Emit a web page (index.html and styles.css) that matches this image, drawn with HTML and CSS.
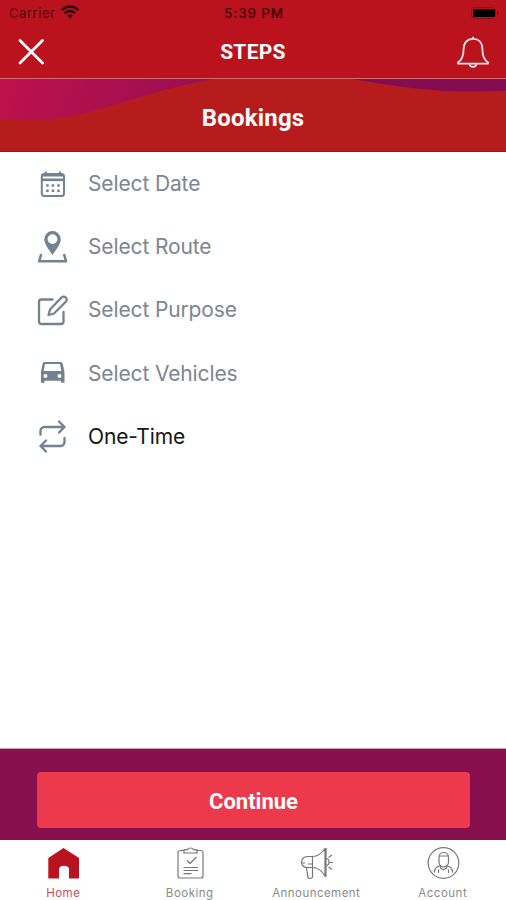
FILE: index.html
```html
<!DOCTYPE html>
<html lang="en">
<head>
<meta charset="utf-8">
<title>Steps</title>
<link rel="stylesheet" href="styles.css">
</head>
<body>
<div class="screen">
  <header class="top">
    <div class="status">
      <div class="carrier"><span>Carrier</span>
        <svg class="wifi" width="18" height="14" viewBox="0 0 18 14" fill="none" stroke="#240306" stroke-width="2.5"><path d="M.8 5.2C5.5.4 12.5.4 17.2 5.2M3.8 8.2c3-3 7.4-3 10.4 0"/><path d="M9 13.4 6.2 10.500C7.800 9 10.200 9 11.800 10.500Z" fill="#240306" stroke="none"/></svg>
      </div>
      <span class="clock">5:39 PM</span>
      <svg class="battery" width="28" height="12" viewBox="0 0 28 12"><rect x=".5" y=".5" width="24" height="11" rx="3" fill="none" stroke="#950f1a"/><rect x="2" y="2" width="22" height="8" rx="1" fill="#000"/><path d="M26 4v4c2-1 2-3 0-4" fill="#71101a"/></svg>
    </div>
    <div class="titlebar">
      <svg class="close" width="30" height="30" viewBox="0 0 30 30" stroke="#fff" stroke-width="2.800" stroke-linecap="round"><path d="m4 3.500 22.500 22.500M26.500 3.500 4 26"/></svg>
      <h1>STEPS</h1>
      <svg class="bell" width="34" height="34" viewBox="0 0 34 34" fill="none" stroke="#fbe3e5" stroke-width="1.800" stroke-linejoin="round"><path d="M17 3.800C10.500 3.800 7.600 8.500 7.600 14 7.600 21.500 6 25 2 27.200V28.600H32V27.200C28 25 26.400 21.500 26.400 14 26.400 8.500 23.500 3.800 17 3.800ZM17 3.700V1.700M13.500 29c.5 3.800 6.500 3.800 7 0"/></svg>
    </div>
  </header>
  <section class="banner">
    <svg class="waves" width="506" height="73" viewBox="0 0 506 73">
      <defs><linearGradient id="wave" gradientUnits="userSpaceOnUse" x1="0" y1="0" x2="210" y2="30"><stop offset="0" stop-color="#bd114b"/><stop offset=".5" stop-color="#ab1050"/><stop offset="1" stop-color="#990d50"/></linearGradient></defs>
      <path fill="url(#wave)" d="M0 0H213C170 8 135 20 100 30 65 41 35 43 0 40Z"/>
      <path fill="#830d50" d="M352 0H506V11.500C450 15 410 10 352 0Z"/>
    </svg>
    <h2>Bookings</h2>
  </section>
  <main>
    <ul class="options">
      <li><svg width="40" height="40" viewBox="0 0 40 40" fill="none" stroke="#748290" stroke-width="2"><rect x="9.800" y="10" width="22.200" height="22" rx="2.500"/><path stroke-width="2.600" d="M9.800 15.800h22.200"/><path d="M13.700 7.500V12M28 7.500V12M9.800 11.500h22.200"/><path stroke-width="2.400" stroke-dasharray="2.500 3" d="M14.200 21.500h14M14.200 26.800h14"/></svg><span>Select Date</span></li>
      <li><svg width="40" height="40" viewBox="0 0 40 40" fill="none" stroke="#748290" stroke-width="2.500"><path fill="#748290" stroke="none" fill-rule="evenodd" d="M20.500 4a8.200 8.200 0 0 0-8.200 8.200c0 5.300 4.700 10 8.200 15.800 3.500-5.800 8.200-10.500 8.200-15.800A8.200 8.200 0 0 0 20.500 4Zm0 3.200a4.900 4.900 0 1 1 0 9.800 4.900 4.900 0 0 1 0-9.800Z"/><path stroke-linejoin="round" d="M9.200 27 7.200 34.300H34L32 27"/></svg><span>Select Route</span></li>
      <li><svg width="40" height="40" viewBox="0 0 40 40" fill="none" stroke="#748290" stroke-width="2.300" stroke-linecap="round" stroke-linejoin="round"><path d="M20.500 9.500H9.500a2.500 2.500 0 0 0-2.500 2.500v19.500a2.500 2.500 0 0 0 2.500 2.500h19.500a2.500 2.500 0 0 0 2.500-2.500V22"/><path d="M18 19.500 29.500 7.500a3 3 0 0 1 4.300 4.300L22 23.500l-5.500 1.500Z"/></svg><span>Select Purpose</span></li>
      <li><svg width="40" height="40" viewBox="0 0 40 40"><path fill="#748290" fill-rule="evenodd" d="M12.500 9h16c1.200 0 2 .8 2.300 2l1.700 8v10.700h-3.500v-2H12.500v2H9V19l1.500-8c.3-1.200 1-2 2-2Zm.5 2-1.300 7h17.600L28 11Zm.5 10a2 2 0 1 0 0 4 2 2 0 0 0 0-4Zm14 0a2 2 0 1 0 0 4 2 2 0 0 0 0-4Z"/></svg><span>Select Vehicles</span></li>
      <li class="on"><svg width="40" height="40" viewBox="0 0 40 40" fill="none" stroke="#748290" stroke-width="2.400" stroke-linecap="round" stroke-linejoin="round"><path d="M8.500 18.500V15a4 4 0 0 1 4-4H32.500M27 5.500l5.500 5.500L27 16.500M32.500 22v4a4 4 0 0 1-4 4H8.500M14 24.500 8.500 30l5.500 5.500"/></svg><span>One-Time</span></li>
    </ul>
  </main>
  <div class="action"><button>Continue</button></div>
  <nav>
    <a class="active"><svg width="36" height="36" viewBox="0 0 36 36"><path fill="#b9131f" d="M18.500 3 34 13V33.500H24V24c0-4.500-10-4.500-10 0V33.500H3.300V13Z"/></svg><span>Home</span></a>
    <a><svg width="36" height="36" viewBox="0 0 36 36" fill="none" stroke="#777" stroke-width="1.200" stroke-linejoin="round"><path d="M12 5.500H8a2 2 0 0 0-2 2v23.500a2 2 0 0 0 2 2H29a2 2 0 0 0 2-2V7.500a2 2 0 0 0-2-2H25M12 4.700h3.500c1-2.300 5-2.300 6 0H25V8H12ZM15 15.500l3 3 6.500-6.500M11.500 22.500H26M11.500 25.500H26M11.500 28.700h8"/></svg><span>Booking</span></a>
    <a class="announcement"><svg width="36" height="36" viewBox="0 0 36 36" fill="none" stroke="#777" stroke-width="1.200" stroke-linejoin="round"><path d="M14.500 11.500H9a5.700 5.700 0 0 0-5 8c1 2.300 2.500 3 5 3H14.500C19.500 22.500 24 26 27 31V3.500C24 8 19.500 11.500 14.500 11.500ZM14.500 11.500V22.500M3.500 18H7M10 19h4.500M8.500 22.500l1.500 10.500c2.500 1 4.500 0 4.500-1V22.500M28 3v29M28 13.500c4 0 4 7 0 7M30.500 12.500l3.500-2.500M31 17.500h4M30.500 22l3.500 2.500"/></svg><span>Announcement</span></a>
    <a><svg width="36" height="36" viewBox="0 0 36 36" fill="none" stroke="#777" stroke-width="1.200" stroke-linejoin="round"><circle cx="18.500" cy="18" r="15.300"/><path d="M14 17V12c0-6 9.500-6 9.500 0V17c0 6.500-9.500 6.500-9.500 0ZM14 11h9.500M15.500 20v3l3 1.800 3-1.800V20M15.500 20.500C11.500 22 9.500 23 9.500 27.500M21.500 20.500C25.500 22 27.500 23 27.500 27.500M13.500 24.500v3.500M23.500 24.500v3.500"/></svg><span>Account</span></a>
  </nav>
</div>
</body>
</html>
```

FILE: styles.css
```css
* { box-sizing: border-box; }
body { margin: 0; background: #fff; font-family: Inter, sans-serif; }
h1, h2, ul { margin: 0; padding: 0; }
.screen { width: 506px; height: 900px; display: flex; flex-direction: column; overflow: hidden; }
.top { height: 79px; flex: none; background: #bb131e; border-bottom: 1px solid #d66a70; }
.status { height: 26px; display: grid; grid-template-columns: 1fr auto 1fr; align-items: center; padding: 0 7px 0 9px; font-size: 13px; color: #4d070c; }
.carrier { display: flex; align-items: center; gap: 6px; letter-spacing: .55px; }
.wifi { margin-top: -2px; }
.clock { font-weight: 500; color: #3b0509; font-size: 13.500px; letter-spacing: .85px; }
.battery { justify-self: end; }
.titlebar { height: 52px; display: grid; grid-template-columns: 1fr auto 1fr; align-items: center; padding: 0 16px; color: #fff; }
.bell { justify-self: end; }
h1 { font: 700 21px/30px Roboto, sans-serif; letter-spacing: .3px; }
.banner { display: grid; height: 73px; flex: none; background: #b71c1c; border-bottom: 1px solid #b01018; }
.waves, h2 { grid-area: 1 / 1; }
h2 { font: 700 24px/30px Roboto, sans-serif; letter-spacing: .2px; color: #fff; text-align: center; padding-top: 24px; }
main { flex: 1; }
.options { list-style: none; }
.options li { height: 63.200px; display: flex; align-items: center; gap: 16px; padding-left: 32px; font-size: 21px; letter-spacing: -.13px; color: #7c8590; white-space: nowrap; }
.options .on { color: #151515; }
.action { height: 92px; flex: none; background: #870f4e; border-top: 1px solid #c9a0b5; padding: 23px 36px 12px 37px; }
button { width: 433px; height: 56px; border: 0; border-radius: 4px; background: #ec394b; color: #fff; font: 700 22px Roboto, sans-serif; padding: 2px 0 0; }
nav { height: 60px; flex: none; display: grid; grid-template-columns: repeat(4, 1fr); }
nav a { display: flex; flex-direction: column; align-items: center; padding-top: 5px; font-size: 11.500px; line-height: 14px; color: #8a8a8a; letter-spacing: .5px; }
nav span { margin-top: 5px; }
nav .active { color: #cf4a52; }
nav .announcement { letter-spacing: .45px; }
```
